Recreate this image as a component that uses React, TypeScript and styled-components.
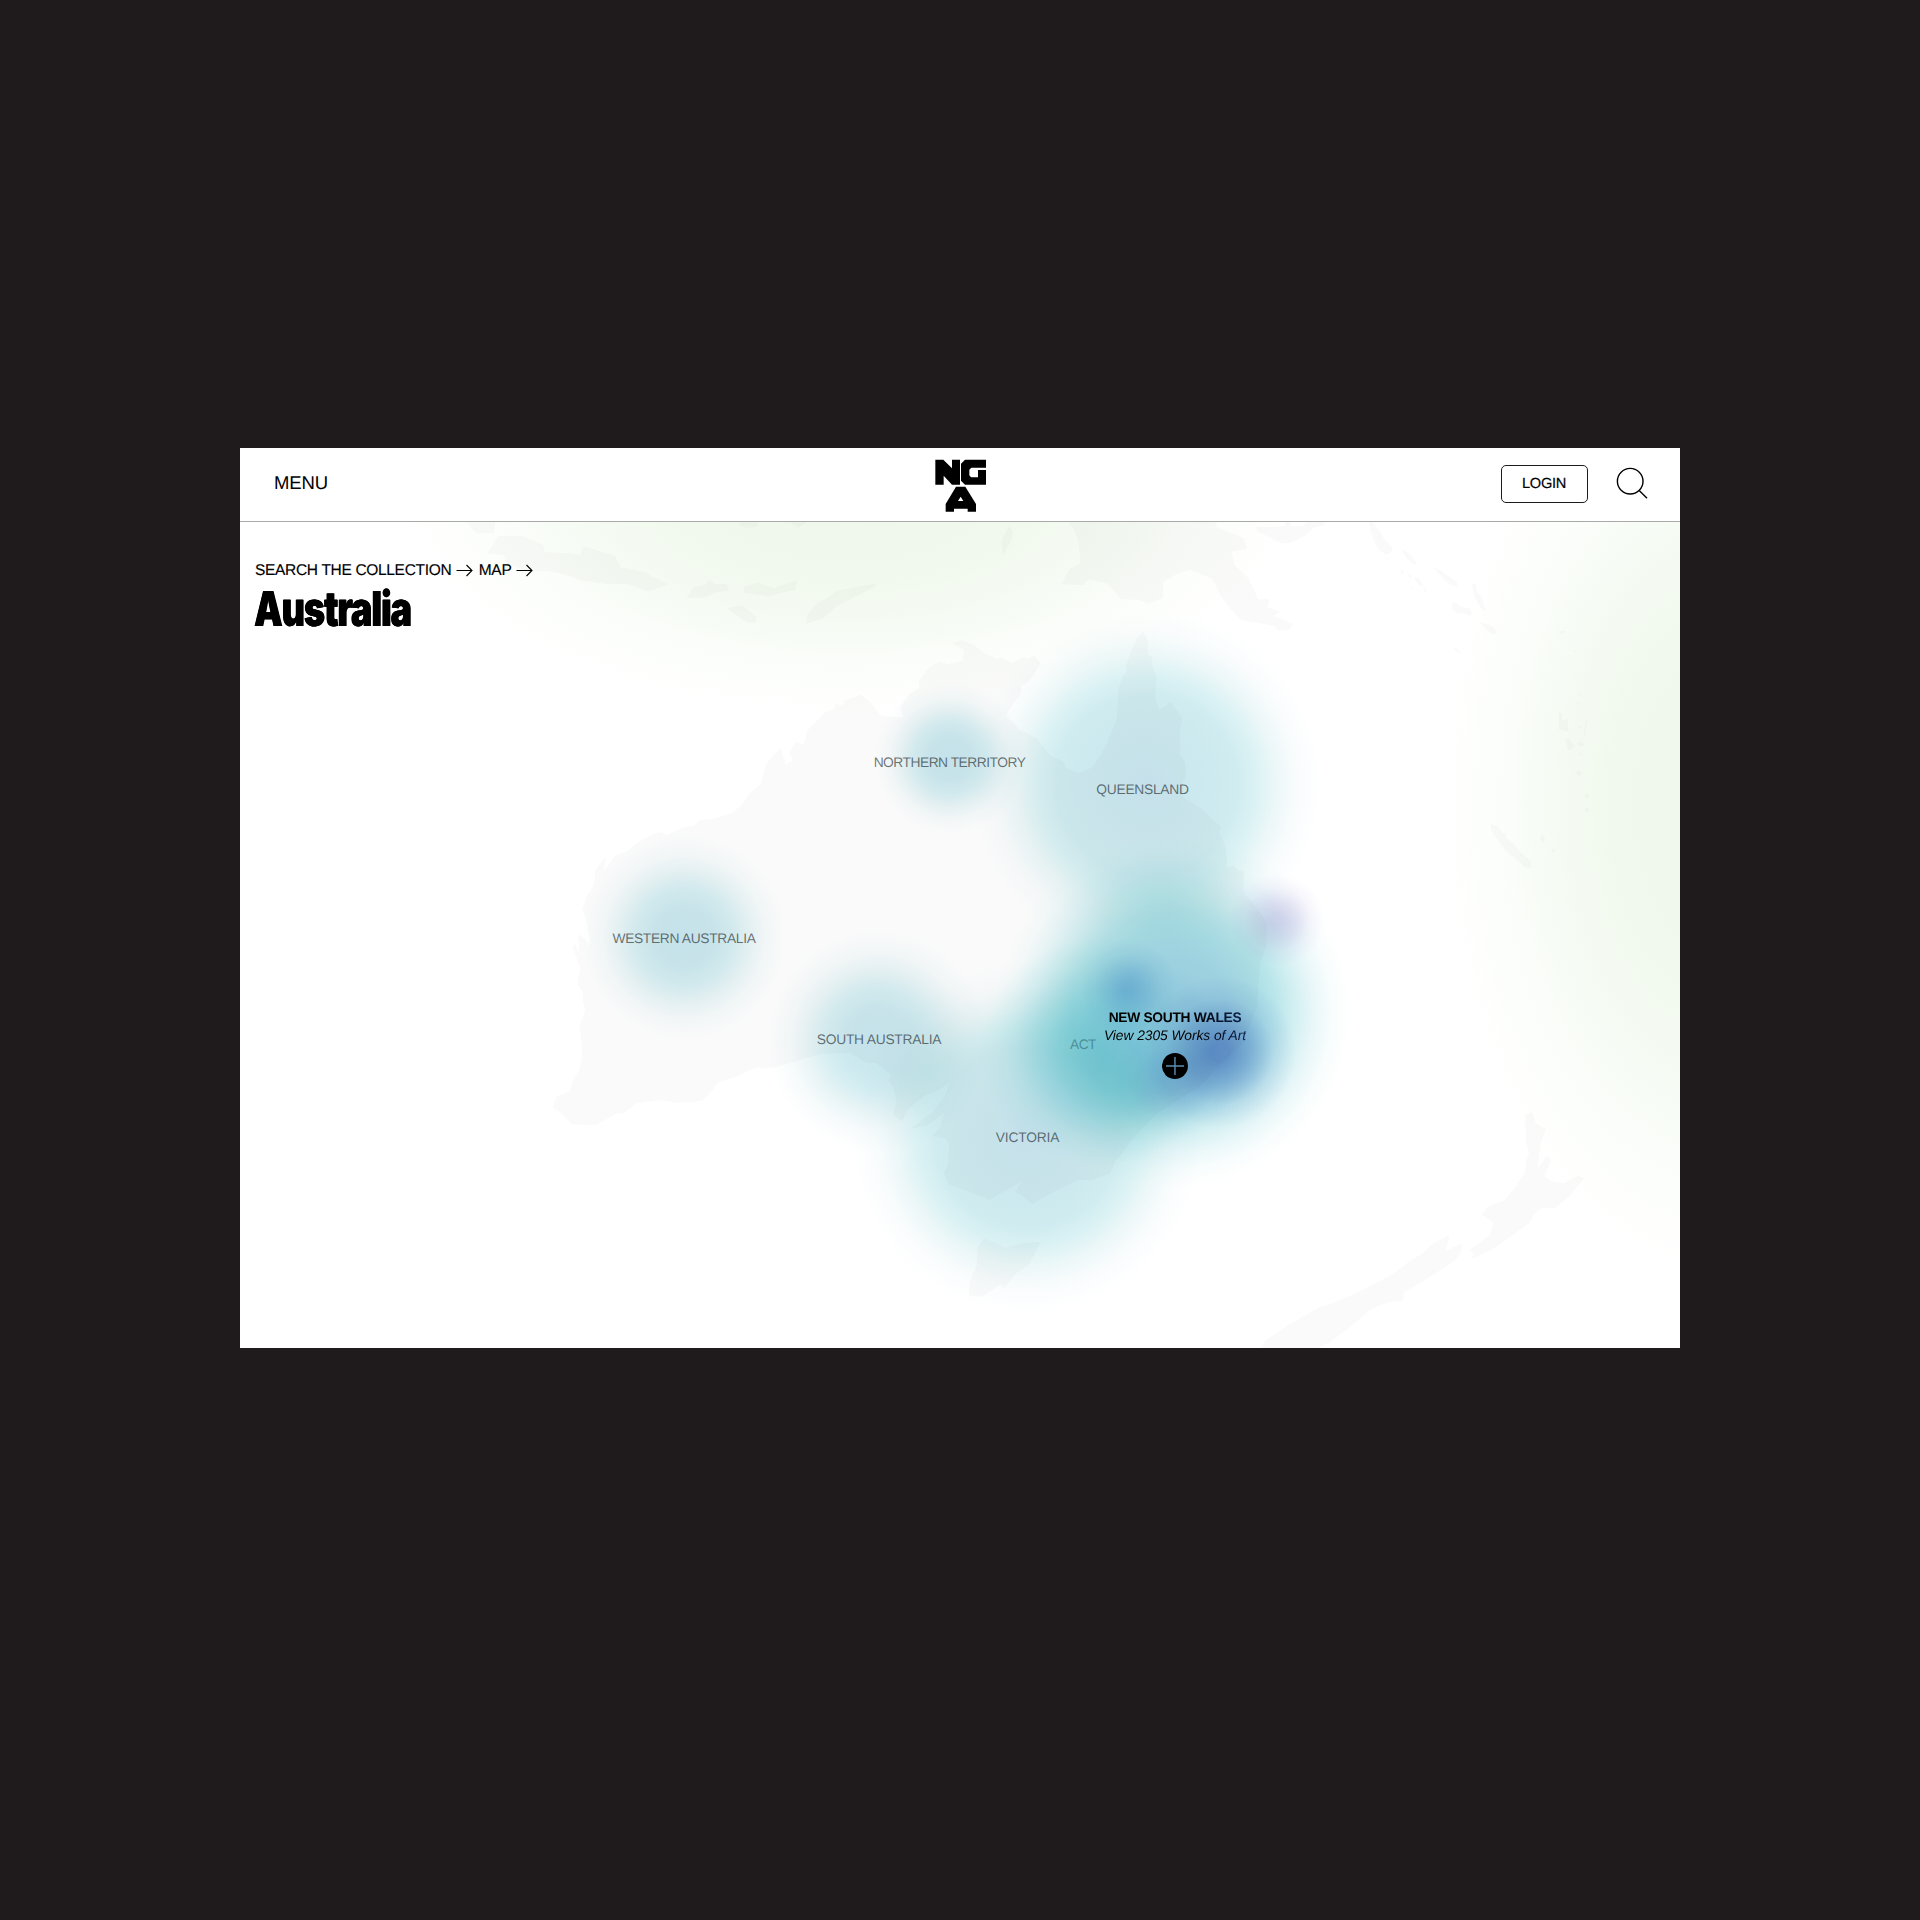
import React from "react";
import styled, { createGlobalStyle } from "styled-components";

const GlobalStyle = createGlobalStyle`
  *, *::before, *::after { box-sizing: border-box; }
  body { margin: 0; background: #1f1b1c; }
`;

const Stage = styled.div`
  display: flex;
  justify-content: center;
  width: 1920px;
  height: 1920px;
  padding-top: 448px;
  background: #1f1b1c;
  font-family: "Liberation Sans", Arial, sans-serif;
  text-rendering: geometricPrecision;
  color: #000;
`;

const Browser = styled.div`
  display: flex;
  flex-direction: column;
  width: 1440px;
  height: 900px;
  background: #fff;
  overflow: hidden;
`;

const Header = styled.header`
  display: grid;
  grid-template-columns: 1fr auto 1fr;
  align-items: center;
  flex: none;
  height: 74px;
  padding: 0 32px 0 33px;
  border-bottom: 1px solid #a8aaa8;
`;

const MenuButton = styled.button`
  justify-self: start;
  padding: 0 0 0 1px;
  margin-top: -4px;
  border: 0;
  background: none;
  font: 400 18.5px/24px "Liberation Sans", Arial, sans-serif;
  text-rendering: geometricPrecision;
  letter-spacing: -0.1px;
  color: #000;
`;

const Logo = styled.svg`
  display: block;
  width: 52px;
  height: 54px;
  margin-top: 2px;
`;

const Actions = styled.div`
  display: flex;
  align-items: center;
  justify-self: end;
  gap: 28px;
  margin-top: -2px;
`;

const LoginButton = styled.button`
  width: 87px;
  height: 38px;
  padding: 1px 1px 0 0;
  border: 1px solid #1c1c1c;
  border-radius: 5px;
  background: none;
  font: 400 14.6px/20px "Liberation Sans", Arial, sans-serif;
  text-rendering: geometricPrecision;
  letter-spacing: -0.3px;
  color: #000;
  -webkit-text-stroke: 0.2px #000;
`;

const SearchIcon = styled.svg`
  display: block;
  width: 32px;
  height: 32px;
  margin-top: -1px;
`;

const MapArea = styled.main`
  position: relative;
  flex: 1;
`;

const MapArt = styled.svg`
  position: absolute;
  inset: 0;
  width: 1440px;
  height: 826px;
  isolation: isolate;
`;

const Heading = styled.div`
  position: relative;
  display: flex;
  flex-direction: column;
  align-items: flex-start;
  padding: 39px 0 0 15px;
`;

const Crumbs = styled.nav`
  display: flex;
  align-items: center;
  height: 20px;
  font-size: 15.5px;
  line-height: 20px;
  letter-spacing: -0.32px;
  -webkit-text-stroke: 0.15px #000;
`;

const CrumbArrow = styled.svg`
  display: block;
  width: 17px;
  height: 13px;
  margin: -2px 5.5px 0 5px;
`;

const Title = styled.h1`
  margin: 2px 0 0 -1px;
  font: 900 48px/52px Inter, "Liberation Sans", sans-serif;
  letter-spacing: -1.4px;
  white-space: nowrap;
  transform: scaleX(0.75);
  transform-origin: 0 50%;
  text-shadow: 0.5px 0 #000, -0.5px 0 #000;
`;

const Place = styled.span<{ $x: number; $y: number; $tone?: string; $spacing?: number }>`
  position: absolute;
  left: ${(p) => p.$x}px;
  top: ${(p) => p.$y}px;
  transform: translate(-50%, -50%);
  font-size: 13.8px;
  line-height: 18px;
  letter-spacing: ${(p) => p.$spacing ?? -0.5}px;
  white-space: nowrap;
  color: ${(p) => p.$tone ?? "rgba(20, 28, 30, 0.62)"};
`;

const ActivePlace = styled.div`
  position: absolute;
  left: 935px;
  top: 487px;
  transform: translateX(-50%);
  display: flex;
  flex-direction: column;
  align-items: center;
  white-space: nowrap;
`;

const shade = `
  background: linear-gradient(90deg, #000 62%, #0b1f45 100%);
  background-clip: text;
  -webkit-background-clip: text;
  color: transparent;
`;

const ActiveName = styled.strong`
  font-size: 13.8px;
  line-height: 18px;
  letter-spacing: -0.3px;
  ${shade}
`;

const ActiveCount = styled.em`
  font-size: 13.8px;
  line-height: 18px;
  letter-spacing: -0.06px;
  ${shade}
`;

const PlusButton = styled.svg`
  display: block;
  width: 26px;
  height: 26px;
  margin-top: 8px;
`;

const Land = styled.g`
  fill: #fafafa;
`;

const Tint = styled.ellipse`
  mix-blend-mode: multiply;
`;

type Stop = [number, string];

const pale: Stop[] = [
  [0, "#c9e5f0"], [0.2, "#cbe8ef"], [0.4, "#cdeaef"], [0.52, "#d0ecf0"],
  [0.63, "#dbf2f4"], [0.74, "#ecf7f8"], [0.86, "#f9fcfd"], [1, "#ffffff"],
];
const small: Stop[] = [
  [0, "#c9e6ef"], [0.3, "#cce9ef"], [0.46, "#d5eef2"], [0.62, "#e7f4f6"],
  [0.8, "#f7fbfc"], [1, "#ffffff"],
];
const strong: Stop[] = [
  [0, "#9bcee4"], [0.3, "#a0d6e5"], [0.46, "#a9dee6"], [0.57, "#b8e5ea"],
  [0.68, "#d2eff1"], [0.79, "#e9f7f9"], [0.9, "#f9fdfd"], [1, "#ffffff"],
];
const teal: Stop[] = [
  [0, "#c7f1f6"], [0.35, "#ccf3f6"], [0.55, "#dbf6f8"], [0.75, "#effbfb"], [1, "#ffffff"],
];
const spot = (core: string, mid: string, rim: string): Stop[] => [
  [0, core], [0.12, core], [0.42, mid], [0.7, rim], [1, "#ffffff"],
];
const green: Stop[] = [
  [0, "#eff7ec"], [0.4, "#f1f9ee"], [0.6, "#f6fbf4"], [0.8, "#fcfefb"], [1, "#ffffff"],
];

const blobs: { id: string; cx: number; cy: number; rx: number; ry: number; stops: Stop[] }[] = [
  { id: "north", cx: 850, cy: 490, rx: 460, ry: 228, stops: green },
  { id: "east", cx: 1725, cy: 805, rx: 290, ry: 485, stops: green },
  { id: "wa", cx: 684, cy: 937, rx: 103, ry: 103, stops: small },
  { id: "nt", cx: 950, cy: 758, rx: 76, ry: 76, stops: small },
  { id: "sa", cx: 878, cy: 1041, rx: 111, ry: 111, stops: small },
  { id: "qld", cx: 1146, cy: 785, rx: 175, ry: 175, stops: pale },
  { id: "vic", cx: 1027, cy: 1137, rx: 175, ry: 175, stops: pale },
  { id: "nsw", cx: 1173, cy: 1012, rx: 178, ry: 176, stops: strong },
  { id: "act", cx: 1100, cy: 1052, rx: 122, ry: 114, stops: teal },
  { id: "s1", cx: 1128, cy: 987, rx: 48, ry: 48, stops: spot("#cbe0f6", "#e0edf9", "#f5f9fd") },
  { id: "s2", cx: 1220, cy: 1052, rx: 76, ry: 76, stops: spot("#96abdf", "#bacbeb", "#e9effa") },
  { id: "s3", cx: 1172, cy: 1085, rx: 62, ry: 54, stops: spot("#d8e1f5", "#e6ecf9", "#f7fafd") },
  { id: "s4", cx: 1277, cy: 920, rx: 48, ry: 46, stops: spot("#dfdaf0", "#e9e6f5", "#f7f6fc") },
];

const MapPicture = () => (
  <MapArt viewBox="240 522 1440 826" aria-hidden="true">
    <defs>
      {blobs.map((b) => (
        <radialGradient key={b.id} id={`tint-${b.id}`}>
          {b.stops.map(([at, color]) => (
            <stop key={at} offset={at} stopColor={color} />
          ))}
        </radialGradient>
      ))}
    </defs>
    <rect x="240" y="522" width="1440" height="826" fill="#fff" />
    <Land>
      {/* western and central Australia */}
      <g transform="translate(540 600) scale(.33333 .35714)">
        <path d="M38 1420 50 1390 90 1375 97 1350 120 1310 127 1270 120 1190 135 1150 127 1115 130 1100 113 1075 120 1030 100 975 103 960 117 990 115 935 137 950 147 972 150 945 135 885 128 865 140 830 160 800 167 755 197 718 192 760 222 718 265 700 300 675 350 652 365 650 380 658 430 637 460 632 480 615 515 614 575 597 605 575 627 542 663 513 678 460 722 412 737 460 760 450 748 427 768 397 790 407 803 365 855 315 885 303 885 290 907 295 912 282 963 265 995 290 1023 325 1090 330 1082 300 1105 265 1140 243 1135 228 1165 190 1197 172 1225 180 1268 170 1272 140 1238 120 1265 113 1300 125 1335 150 1370 165 1385 160 1415 177 1450 160 1465 165 1483 155 1502 178 1470 225 1443 240 1443 262 1405 310 1400 325 1440 365 1502 402V1568H1228L1225 1510 1175 1500 1200 1480 1212 1437 1165 1470 1115 1480 1180 1430 1210 1395 1230 1350 1200 1370 1150 1390 1105 1425 1085 1460 1058 1440 1070 1405 1060 1365 1045 1345 1053 1330 1010 1297 975 1295 930 1268 840 1272 700 1310 645 1310 595 1333 535 1350 505 1387 485 1403 410 1408 365 1400 288 1410 250 1438 232 1437 168 1470 97 1468 65 1437Z" />
      </g>
      {/* Queensland, New Guinea and the Solomon Sea */}
      <g transform="translate(960 500) scale(.33333)">
        <path d="M140 650 180 690 230 715 270 765 310 785 320 805 360 820 400 800 435 740 470 660 475 570 490 525 500 515 497 495 530 415 550 395 563 420 563 460 575 470 578 500 590 535 585 590 597 630 633 605 667 655 660 690 660 765 675 785 678 830 668 848 670 893 720 923 783 980 778 1000 797 1040 803 1105 820 1095 840 1115 853 1110 848 1170 862 1215H100V680Z" />
        <path d="M320 60 345 95 355 125 362 190 328 208 305 253 370 255 387 238 440 250 483 298 540 300 567 312 610 292 610 245 650 222 688 209 757 235 780 285 810 325 845 360 945 378 955 392 990 388 998 372 942 348 960 335 922 322 928 297 895 298 865 235 822 193 815 155 862 147 850 113 770 82 765 60Z" />
        <path d="M890 80 935 82 975 78 978 60 992 66 992 78 1025 78 1050 60H1092V75L1060 85 1030 110 990 130 965 130 890 92ZM148 77 158 95 155 120 128 167 125 120Z" />
      </g>
      {/* south-east coast and Tasmania */}
      <g transform="translate(800 880) scale(.35714 .33333)">
        <path d="M425 -20H1240L1243 40 1280 85 1308 130 1305 200 1290 240 1285 290 1280 380 1240 490 1180 550 1120 620 1000 700 930 780 880 850 870 880 820 900 780 900 720 930 650 972 620 945 603 935 620 905 570 935 530 960 460 930 415 912 403 880 415 850 418 790 405 772 425 765Z" />
        <path d="M497 1105 515 1075 545 1088 575 1102 620 1090 675 1085 640 1155 605 1180 570 1225 563 1213 508 1250 473 1248 475 1205 495 1155Z" />
      </g>
      {/* Java, Bali and Timor */}
      <g transform="translate(440 510) scale(.33333)">
        <path d="M142 130 175 78 245 77 310 105 315 127 390 130 420 135 430 108 525 137 542 172 610 185 685 223 625 245 565 223 500 222 430 212 360 190 320 182 270 185 200 160 190 135ZM78 37H165L163 70H110ZM740 263 762 230 795 225 808 210 825 222 860 222 868 243 830 245 790 263ZM912 230 955 217 1000 235 1072 210 1065 240 985 258 912 248ZM860 295 907 285 950 322 945 338 922 338ZM1097 342 1103 315 1130 280 1160 265 1190 242 1310 220 1305 230 1190 288 1150 325ZM897 37H953L950 50 920 54 900 48ZM1050 37H1100L1075 54Z" />
      </g>
      {/* Solomon Islands, Vanuatu and New Caledonia */}
      <g transform="translate(1340 510) scale(.33333)">
        <path d="M86 34H97L125 70 132 88 158 112 154 127 138 135 115 118 95 75ZM183 118 212 132 232 163 218 162 196 140ZM280 172 300 180 350 215 354 232 320 218ZM396 223 407 223 412 245 425 260 438 307 420 290 403 258ZM337 280 350 280 364 291 388 294 398 315 388 318 372 310 352 312 337 298ZM420 336 462 352 470 370 458 373 437 358ZM338 410 352 418 366 432 350 425ZM656 368 665 362 678 364 664 373ZM657 605 665 612 668 632 682 625 685 665 672 662 657 658ZM675 683 690 690 706 710 685 723ZM738 625 741 635 733 685 730 680ZM713 700 726 694 733 708 715 708ZM705 790 715 780 726 790 718 797ZM734 852 741 847 748 860 740 868ZM735 893 741 890 748 904 738 908ZM450 935 458 945 472 948 485 965 498 972 500 985 520 1000 545 1030 574 1055 572 1074 555 1072 530 1050 495 1020 470 985 455 962ZM600 985 608 972 616 990 610 999ZM633 1016 648 1018 640 1030ZM180 178 192 184 186 195ZM204 193 215 197 210 207ZM222 205 235 202 250 225 240 228ZM250 235 262 240 255 248ZM213 230 222 234 217 242ZM712 648 727 648 718 657ZM715 725 733 738 720 735ZM714 550 723 553 718 560ZM711 576 720 578 715 586ZM702 418 712 422 706 428ZM137 143 148 143 142 149Z" />
      </g>
      {/* New Zealand */}
      <g transform="translate(1240 1080) scale(.33333)">
        <path d="M855 104 877 97 888 132 917 147 900 195 894 264 923 225 934 241 912 287 938 305 972 310 1014 287 1033 295 985 352 947 383H906L884 400 868 430 752 511 696 536 700 518 689 511 752 463 759 427 725 404 742 382 793 360 825 323 855 275 860 238 867 223 859 190ZM629 465 617 513 668 489 663 515 647 540 545 607 493 636 487 664 447 666 388 689 335 738 268 788 235 804H64L72 785 140 738 238 682 290 665 375 627 462 580 515 538 547 522 578 490Z" />
      </g>
    </Land>
    {blobs.map((b) => (
      <Tint key={b.id} cx={b.cx} cy={b.cy} rx={b.rx} ry={b.ry} fill={`url(#tint-${b.id})`} />
    ))}
  </MapArt>
);

const Arrow = () => (
  <CrumbArrow viewBox="0 0 17 13" fill="none" stroke="#000" strokeWidth="1.1">
    <path d="M0.5 6.5H16M10.5 1 16 6.5 10.5 12" />
  </CrumbArrow>
);

export default function App() {
  return (
    <>
      <GlobalStyle />
      <Stage>
        <Browser>
          <Header>
            <MenuButton>MENU</MenuButton>
            <Logo viewBox="105 57 156 162" aria-label="NGA">
              <path d="M106 59H130L156 85V59H180V134H156L131 107V134H106ZM195 59H258V83H214L208 89V106L213 112H234V90H258V134H195L183 122V71ZM168 140H196L228 192V215H203V206H162V215H137V192ZM182 170 174 183H190Z" fillRule="evenodd" />
            </Logo>
            <Actions>
              <LoginButton>LOGIN</LoginButton>
              <SearchIcon viewBox="0 0 32 32" fill="none" stroke="#000" strokeWidth="1.4">
                <circle cx="14.2" cy="14.2" r="12.8" />
                <path d="M23.2 23.4 31 31.2" />
              </SearchIcon>
            </Actions>
          </Header>
          <MapArea>
            <MapPicture />
            <Heading>
              <Crumbs>
                <span>SEARCH THE COLLECTION</span>
                <Arrow />
                <span>MAP</span>
                <Arrow />
              </Crumbs>
              <Title>Australia</Title>
            </Heading>
            <Place $x={709.5} $y={241}>NORTHERN TERRITORY</Place>
            <Place $x={902.5} $y={268} $spacing={-0.28}>QUEENSLAND</Place>
            <Place $x={444} $y={417} $spacing={-0.33}>WESTERN AUSTRALIA</Place>
            <Place $x={639} $y={518} $spacing={-0.23}>SOUTH AUSTRALIA</Place>
            <Place $x={787.5} $y={616} $spacing={-0.2}>VICTORIA</Place>
            <Place $x={843} $y={523} $tone="rgba(40, 90, 100, 0.55)">ACT</Place>
            <ActivePlace>
              <ActiveName>NEW SOUTH WALES</ActiveName>
              <ActiveCount>View 2305 Works of Art</ActiveCount>
              <PlusButton viewBox="0 0 26 26">
                <circle cx="13" cy="13" r="13" />
                <path d="M4 13H22M13 4V22" stroke="#5b8fb0" strokeWidth="1.4" />
              </PlusButton>
            </ActivePlace>
          </MapArea>
        </Browser>
      </Stage>
    </>
  );
}
